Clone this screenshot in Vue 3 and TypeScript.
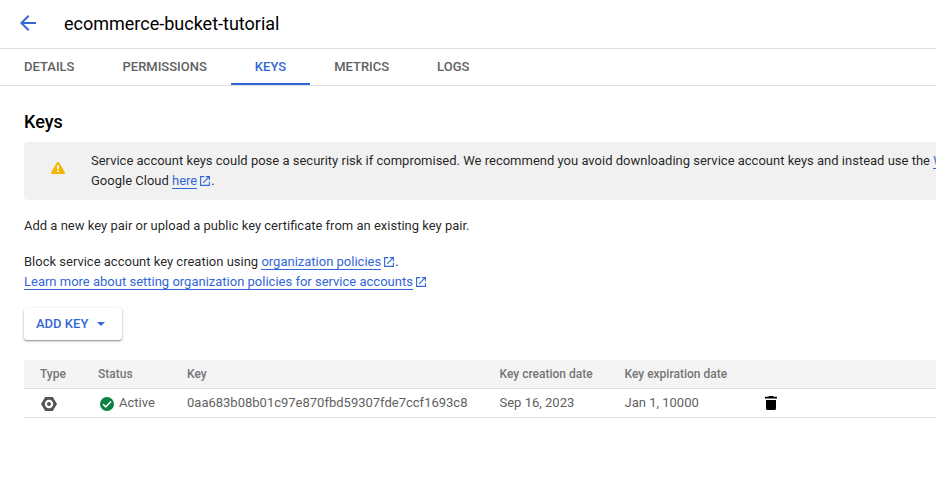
<script setup lang="ts">
import { h, ref } from 'vue'

interface Tab {
  id: string
  label: string
}

interface ServiceKey {
  id: string
  status: string
  created: string
  expires: string
}

const tabs: Tab[] = [
  { id: 'details', label: 'DETAILS' },
  { id: 'permissions', label: 'PERMISSIONS' },
  { id: 'keys', label: 'KEYS' },
  { id: 'metrics', label: 'METRICS' },
  { id: 'logs', label: 'LOGS' },
]
const activeTab = ref('keys')

const keys: ServiceKey[] = [
  {
    id: '0aa683b08b01c97e870fbd59307fde7ccf1693c8',
    status: 'Active',
    created: 'Sep 16, 2023',
    expires: 'Jan 1, 10000',
  },
]

const ExternalIcon = () =>
  h('svg', { viewBox: '0 0 10 10', width: 10, height: 10, fill: 'none', stroke: 'currentColor', 'stroke-width': 1.1 }, [
    h('path', { d: 'M4.2.6H.6v8.8h8.8V5.8M5.8.6h3.6v3.6M9.3.7 3.2 6.8' }),
  ])
</script>

<template>
  <div class="page">
    <header class="topbar">
      <button class="back" aria-label="Back">
        <svg viewBox="0 0 16 16" width="16" height="16"><path d="M16 7H3.83l5.59-5.59L8 0 0 8l8 8 1.41-1.41L3.83 9H16z" fill="currentColor" /></svg>
      </button>
      <h1>ecommerce-bucket-tutorial</h1>
    </header>

    <nav class="tabs">
      <button
        v-for="tab in tabs"
        :key="tab.id"
        class="tab"
        :class="{ active: tab.id === activeTab }"
        @click="activeTab = tab.id"
      >{{ tab.label }}</button>
    </nav>

    <main>
      <h2>Keys</h2>

      <section class="notice">
        <svg class="warn" viewBox="0 0 14 12" width="14" height="12">
          <path d="M7 1.2 12.8 10.8H1.2z" fill="#f4b400" stroke="#f4b400" stroke-width="2.4" stroke-linejoin="round" />
          <path d="M6.1 3.2h1.8v3.9H6.1zM6.1 8.2h1.8V10H6.1z" fill="#fff" />
        </svg>
        <p>
          Service account keys could pose a security risk if compromised. We recommend you avoid downloading service account keys and instead use the <a>Workload Identity Federation</a><br>
          Google Cloud <a>here</a><ExternalIcon class="ext" />.
        </p>
      </section>

      <p class="intro">Add a new key pair or upload a public key certificate from an existing key pair.</p>
      <p class="policy">
        Block service account key creation using <a>organization policies</a><ExternalIcon class="ext" />.<br>
        <a>Learn more about setting organization policies for service accounts</a><ExternalIcon class="ext" />
      </p>

      <button class="add">
        <span>ADD KEY</span>
        <svg viewBox="0 0 8 4" width="8" height="4"><path d="M0 0h8L4 4z" fill="currentColor" /></svg>
      </button>

      <div class="table">
        <div class="row head">
          <span>Type</span><span>Status</span><span>Key</span><span>Key creation date</span><span>Key expiration date</span><span></span>
        </div>
        <div v-for="key in keys" :key="key.id" class="row">
          <span>
            <svg class="hex" viewBox="0 0 16 14" width="16" height="14">
              <path d="M4.2 0h7.6L16 7l-4.2 7H4.2L0 7zM8 2.8a4.2 4.2 0 1 0 0 8.4 4.2 4.2 0 0 0 0-8.4z" fill="#555" fill-rule="evenodd" />
              <circle cx="8" cy="7" r="2" fill="#555" />
            </svg>
          </span>
          <span class="status">
            <svg viewBox="0 0 14 14" width="14" height="14">
              <circle cx="7" cy="7" r="7" fill="#0b8043" />
              <path d="m3 7.2 2.7 2.7L11 4.5" fill="none" stroke="#fff" stroke-width="1.5" />
            </svg>
            {{ key.status }}
          </span>
          <span>{{ key.id }}</span>
          <span>{{ key.created }}</span>
          <span>{{ key.expires }}</span>
          <span>
            <svg class="trash" viewBox="0 0 12 14" width="12" height="14">
              <path d="M4 0h4l.7.8H12v1.8H0V.8h3.3zM1 4h10v8.4q0 1.6-1.6 1.6H2.6Q1 14 1 12.4z" fill="#000" />
            </svg>
          </span>
        </div>
      </div>
    </main>
  </div>
</template>

<style>
body {
  background: #fff;
  overflow: hidden;
}
</style>

<style scoped>
.page {
  height: 478px;
  overflow: hidden;
  font: 400 13px/20px Roboto, sans-serif;
  color: rgba(0, 0, 0, 0.87);
}
h1, h2, p {
  margin: 0;
}
button {
  border: 0;
  padding: 0;
  background: none;
  font: inherit;
}
svg {
  display: block;
  flex: none;
}
.topbar {
  display: flex;
  align-items: center;
  height: 48px;
  padding-left: 20px;
  border-bottom: 1px solid #e0e0e0;
}
.back {
  margin-top: -2px;
  margin-right: 28px;
  color: #3367d6;
}
h1 {
  font-size: 18px;
  line-height: 24px;
  font-weight: 400;
  color: #000;
}
.tabs {
  display: flex;
  height: 36px;
  border-bottom: 1px solid #e0e0e0;
}
.tab {
  padding: 2px 24px 0;
  border-bottom: 2px solid transparent;
  font-weight: 500;
  color: #616161;
}
.tab.active {
  color: #3367d6;
  border-color: #3367d6;
}
main {
  padding: 24px 0 0 24px;
}
h2 {
  font-size: 18px;
  line-height: 24px;
  font-weight: 500;
  color: #000;
}
.notice {
  display: flex;
  align-items: center;
  height: 58px;
  margin-top: 8px;
  padding-left: 27px;
  border-radius: 4px 0 0 4px;
  background: #f1f1f1;
  white-space: nowrap;
}
.warn {
  margin-top: -6px;
  margin-right: 26px;
}
a {
  color: #3367d6;
  border-bottom: 1px solid #3367d6;
}
.ext {
  display: inline-block;
  margin: 0 1px 0 3px;
  vertical-align: -1px;
  color: #3367d6;
}
.intro {
  margin-top: 16px;
}
.policy {
  margin-top: 16px;
}
.add {
  display: flex;
  align-items: center;
  gap: 9px;
  width: 98px;
  height: 32px;
  margin-top: 16px;
  padding-left: 12px;
  border-radius: 3px;
  color: #3367d6;
  font-weight: 500;
  box-shadow: 0 1px 3px rgba(0, 0, 0, 0.3), 0 1px 1px rgba(0, 0, 0, 0.2);
}
.table {
  margin-top: 20px;
}
.row {
  display: grid;
  grid-template-columns: 58px 89px 312.5px 125px 140.5px 1fr;
  align-items: center;
  height: 28px;
  padding-left: 16px;
  border-bottom: 1px solid #e0e0e0;
  color: #616161;
}
.head {
  background: #f4f4f4;
  font-size: 12px;
  font-weight: 500;
  color: #757575;
}
.hex {
  margin: 2px 0 0 1px;
}
.status {
  display: flex;
  align-items: center;
  gap: 5px;
}
.status svg {
  margin: 2px 0 0 2px;
}
</style>
